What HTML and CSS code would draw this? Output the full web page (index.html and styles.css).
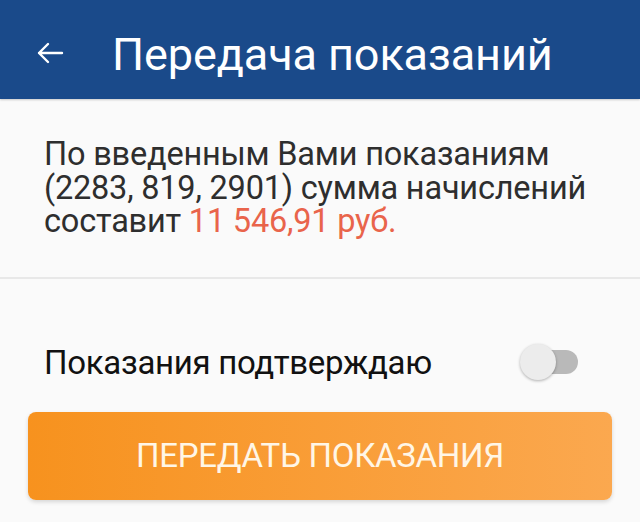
FILE: index.html
```html
<!DOCTYPE html>
<html lang="ru">
<head>
<meta charset="utf-8">
<link rel="stylesheet" href="styles.css">
</head>
<body>
<header class="appbar">
  <svg class="back" viewBox="0 0 28 24" width="28" height="24" aria-hidden="true">
    <path d="M26 12H3M12 3L3 12L12 21" fill="none" stroke="#fff" stroke-width="2.4" stroke-linecap="round" stroke-linejoin="round"/>
  </svg>
  <h1 class="title">Передача показаний</h1>
</header>
<section class="summary">
  <p class="summary-text">По введенным Вами показаниям (2283, 819, 2901) сумма начислений составит <span class="amount">11 546,91 руб.</span></p>
</section>
<div class="divider"></div>
<section class="confirm">
  <span class="confirm-label">Показания подтверждаю</span>
  <span class="switch"><span class="track"></span><span class="thumb"></span></span>
</section>
<div class="actions">
  <button class="submit">ПЕРЕДАТЬ ПОКАЗАНИЯ</button>
</div>
</body>
</html>
```
FILE: styles.css
```css
* { box-sizing: border-box; }
html, body { margin: 0; padding: 0; }
body {
  width: 640px;
  height: 522px;
  overflow: hidden;
  background: #fafafa;
  font-family: Roboto, "Noto Sans", sans-serif;
}
.appbar {
  height: 99px;
  background: #1a4a8a;
  display: flex;
  align-items: center;
  padding: 10px 0 0 36px;
  box-shadow: 0 1px 2px rgba(0,0,0,0.2);
}
.back { flex: none; margin-bottom: 3px; }
.title {
  margin: 0 0 0 48px;
  color: #fff;
  font-weight: 400;
  font-size: 45px;
  letter-spacing: -0.1px;
}
.summary { padding: 39px 40px 0 44px; }
.summary-text {
  margin: 0;
  font-size: 32.5px;
  line-height: 33.5px;
  color: #2e2e2e;
  letter-spacing: -0.2px;
}
.amount { color: #e9644b; display: inline-block; }
.divider {
  margin-top: 38px;
  height: 2px;
  background: #e8e8e8;
}
.confirm {
  display: flex;
  align-items: center;
  justify-content: space-between;
  padding: 34px 62px 0 44px;
  height: 133px;
}
.confirm-label {
  font-size: 33px;
  color: #111;
  letter-spacing: -0.3px;
}
.switch {
  position: relative;
  width: 58px;
  height: 36px;
  display: block;
}
.track {
  position: absolute;
  left: 12px;
  top: 6px;
  width: 46px;
  height: 24px;
  border-radius: 12px;
  background: #b9b9b9;
}
.thumb {
  position: absolute;
  left: 0;
  top: 0;
  width: 36px;
  height: 36px;
  border-radius: 50%;
  background: #ececec;
  box-shadow: 0 1px 3px rgba(0,0,0,0.3);
}
.actions { padding: 0 28px; }
.submit {
  display: block;
  width: 584px;
  height: 88px;
  border: none;
  border-radius: 8px;
  background: linear-gradient(90deg, #f7921e 0%, #fba84f 100%);
  color: #fff6e6;
  font-family: Roboto, "Noto Sans", sans-serif;
  font-size: 33px;
  letter-spacing: -0.3px;
  box-shadow: 0 2px 4px rgba(0,0,0,0.15);
  padding: 0;
}
```
